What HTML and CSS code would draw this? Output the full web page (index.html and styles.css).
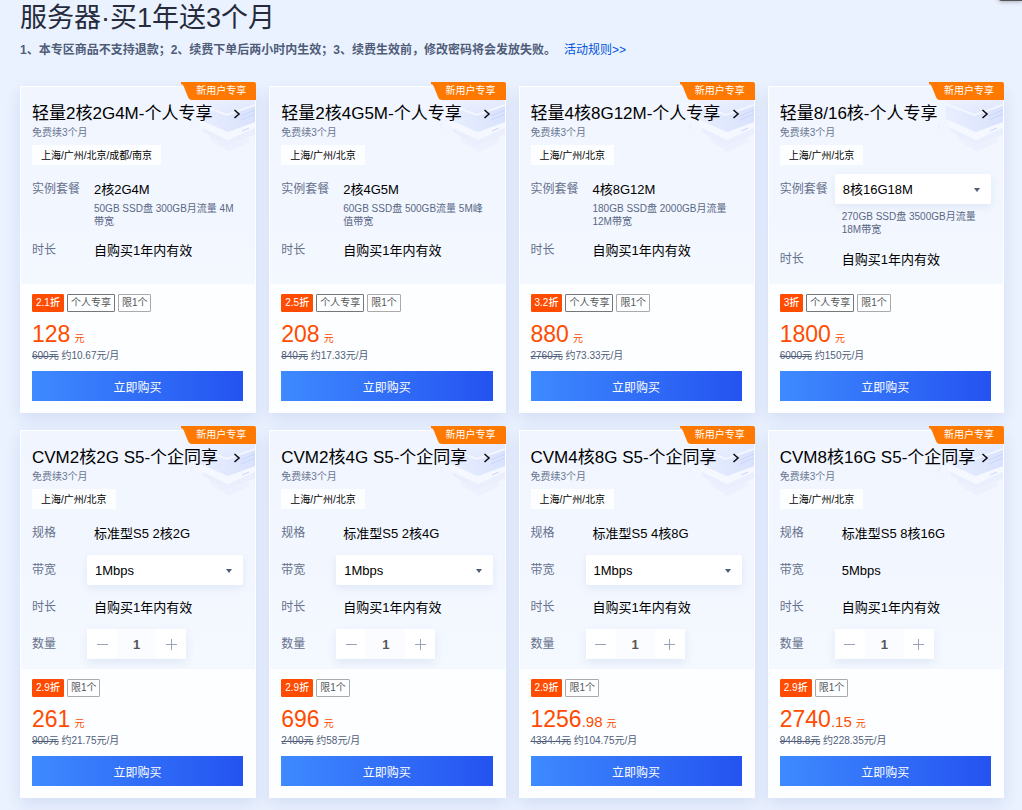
FILE: index.html
```html
<!DOCTYPE html>
<html lang="zh-CN">
<head>
<meta charset="utf-8">
<title>服务器·买1年送3个月</title>
<link rel="stylesheet" href="styles.css">
</head>
<body>
<svg class="sprite" aria-hidden="true">
  <defs>
    <linearGradient id="slab-top" x1="0" y1="0" x2="1" y2="1">
      <stop offset="0" stop-color="#eff3ff"/><stop offset="1" stop-color="#dde5fe"/>
    </linearGradient>
    <linearGradient id="slab-side" x1="0" y1="0" x2="1" y2="0">
      <stop offset="0" stop-color="#e9effe"/><stop offset="1" stop-color="#d9e2fd"/>
    </linearGradient>
  </defs>
  <symbol id="slabs" viewBox="0 0 66 64">
    <path d="M20 36 40 47 60 38V43L40 53 22 42Z" fill="#edf1fe"/>
    <path d="M14 28 39 41 66 29V35L39 47 14 33Z" fill="#eaeffe"/>
    <path d="M10 20 39 34 66 23V28L39 41 12 28Z" fill="#f6f8ff"/>
    <path d="M8 4 38 16 66 4V23L39 33 9 20Z" fill="url(#slab-side)"/>
    <path d="M6 2 20 0H66V5L38 16Z" fill="url(#slab-top)"/>
    <path d="M8 5 38 16 66 6" fill="none" stroke="#f3f6ff" stroke-width="2"/>
    <path d="M52 17 66 11M52 21 66 15M53 32 60 29" fill="none" stroke="#c9d6fa" stroke-width="1"/>
    <path d="M4 24Q-1 27 4 30" fill="none" stroke="#e8edfd" stroke-width="1"/>
  </symbol>
  <symbol id="ribbon" viewBox="0 0 75 18">
    <path d="M0 0H73Q75 0 75 2V18H11Q8 18 7 15L3 5Q2 2 0 2Z" fill="#ff7800"/>
  </symbol>
  <symbol id="chevron" viewBox="0 0 8 10">
    <path d="M1.5 1 6 5 1.5 9" fill="none" stroke="#111" stroke-width="1.6"/>
  </symbol>
</svg>
<div class="floating-tab"></div>
<main class="page">
  <header class="intro">
    <h1 class="intro-title">服务器·买1年送3个月</h1>
    <p class="intro-note"><strong>1、本专区商品不支持退款；2、续费下单后两小时内生效；3、续费生效前，修改密码将会发放失败。</strong><a class="intro-link" href="#">活动规则&gt;&gt;</a></p>
  </header>

  <div class="grid">
    <article class="card">
      <svg class="slabs"><use href="#slabs"/></svg>
      <div class="ribbon"><svg class="ribbon-shape"><use href="#ribbon"/></svg><span class="ribbon-text">新用户专享</span></div>
      <div class="config">
        <h2 class="title"><a class="title-link" href="#">轻量2核2G4M-个人专享<svg class="chevron"><use href="#chevron"/></svg></a></h2>
        <p class="sub">免费续3个月</p>
        <p class="region">上海/广州/北京/成都/南京</p>
        <div class="row"><span class="label">实例套餐</span><div class="field"><span class="value">2核2G4M</span><p class="detail">50GB SSD盘 300GB月流量 4M带宽</p></div></div>
        <div class="row"><span class="label">时长</span><div class="field"><span class="value">自购买1年内有效</span></div></div>
      </div>
      <div class="offer">
        <div class="tags"><span class="tag hot">2.1折</span><span class="tag dark">个人专享</span><span class="tag">限1个</span></div>
        <p class="price"><span class="amount">128</span><span class="unit">元</span></p>
        <p class="was"><s>600元</s> 约10.67元/月</p>
        <button class="buy" type="button">立即购买</button>
      </div>
    </article>

    <article class="card">
      <svg class="slabs"><use href="#slabs"/></svg>
      <div class="ribbon"><svg class="ribbon-shape"><use href="#ribbon"/></svg><span class="ribbon-text">新用户专享</span></div>
      <div class="config">
        <h2 class="title"><a class="title-link" href="#">轻量2核4G5M-个人专享<svg class="chevron"><use href="#chevron"/></svg></a></h2>
        <p class="sub">免费续3个月</p>
        <p class="region">上海/广州/北京</p>
        <div class="row"><span class="label">实例套餐</span><div class="field"><span class="value">2核4G5M</span><p class="detail">60GB SSD盘 500GB流量 5M峰值带宽</p></div></div>
        <div class="row"><span class="label">时长</span><div class="field"><span class="value">自购买1年内有效</span></div></div>
      </div>
      <div class="offer">
        <div class="tags"><span class="tag hot">2.5折</span><span class="tag dark">个人专享</span><span class="tag">限1个</span></div>
        <p class="price"><span class="amount">208</span><span class="unit">元</span></p>
        <p class="was"><s>840元</s> 约17.33元/月</p>
        <button class="buy" type="button">立即购买</button>
      </div>
    </article>

    <article class="card">
      <svg class="slabs"><use href="#slabs"/></svg>
      <div class="ribbon"><svg class="ribbon-shape"><use href="#ribbon"/></svg><span class="ribbon-text">新用户专享</span></div>
      <div class="config">
        <h2 class="title"><a class="title-link" href="#">轻量4核8G12M-个人专享<svg class="chevron"><use href="#chevron"/></svg></a></h2>
        <p class="sub">免费续3个月</p>
        <p class="region">上海/广州/北京</p>
        <div class="row"><span class="label">实例套餐</span><div class="field"><span class="value">4核8G12M</span><p class="detail">180GB SSD盘 2000GB月流量 12M带宽</p></div></div>
        <div class="row"><span class="label">时长</span><div class="field"><span class="value">自购买1年内有效</span></div></div>
      </div>
      <div class="offer">
        <div class="tags"><span class="tag hot">3.2折</span><span class="tag dark">个人专享</span><span class="tag">限1个</span></div>
        <p class="price"><span class="amount">880</span><span class="unit">元</span></p>
        <p class="was"><s>2760元</s> 约73.33元/月</p>
        <button class="buy" type="button">立即购买</button>
      </div>
    </article>

    <article class="card">
      <svg class="slabs"><use href="#slabs"/></svg>
      <div class="ribbon"><svg class="ribbon-shape"><use href="#ribbon"/></svg><span class="ribbon-text">新用户专享</span></div>
      <div class="config">
        <h2 class="title"><a class="title-link" href="#">轻量8/16核-个人专享<svg class="chevron"><use href="#chevron"/></svg></a></h2>
        <p class="sub">免费续3个月</p>
        <p class="region">上海/广州/北京</p>
        <div class="row"><label class="label" for="plan-4">实例套餐</label><div class="field"><div class="select-box"><select class="select" id="plan-4"><option>8核16G18M</option></select></div><p class="detail">270GB SSD盘 3500GB月流量 18M带宽</p></div></div>
        <div class="row"><span class="label">时长</span><div class="field"><span class="value">自购买1年内有效</span></div></div>
      </div>
      <div class="offer">
        <div class="tags"><span class="tag hot">3折</span><span class="tag dark">个人专享</span><span class="tag">限1个</span></div>
        <p class="price"><span class="amount">1800</span><span class="unit">元</span></p>
        <p class="was"><s>6000元</s> 约150元/月</p>
        <button class="buy" type="button">立即购买</button>
      </div>
    </article>

    <article class="card">
      <svg class="slabs"><use href="#slabs"/></svg>
      <div class="ribbon"><svg class="ribbon-shape"><use href="#ribbon"/></svg><span class="ribbon-text">新用户专享</span></div>
      <div class="config">
        <h2 class="title"><a class="title-link" href="#">CVM2核2G S5-个企同享<svg class="chevron"><use href="#chevron"/></svg></a></h2>
        <p class="sub">免费续3个月</p>
        <p class="region">上海/广州/北京</p>
        <div class="row"><span class="label">规格</span><div class="field"><span class="value">标准型S5 2核2G</span></div></div>
        <div class="row"><label class="label" for="band-5">带宽</label><div class="field"><div class="select-box"><select class="select" id="band-5"><option>1Mbps</option></select></div></div></div>
        <div class="row"><span class="label">时长</span><div class="field"><span class="value">自购买1年内有效</span></div></div>
        <div class="row"><label class="label" for="qty-5">数量</label><div class="stepper"><button class="step minus" type="button" aria-label="减少"></button><input class="qty" id="qty-5" type="text" value="1"><button class="step plus" type="button" aria-label="增加"></button></div></div>
      </div>
      <div class="offer">
        <div class="tags"><span class="tag hot">2.9折</span><span class="tag">限1个</span></div>
        <p class="price"><span class="amount">261</span><span class="unit">元</span></p>
        <p class="was"><s>900元</s> 约21.75元/月</p>
        <button class="buy" type="button">立即购买</button>
      </div>
    </article>

    <article class="card">
      <svg class="slabs"><use href="#slabs"/></svg>
      <div class="ribbon"><svg class="ribbon-shape"><use href="#ribbon"/></svg><span class="ribbon-text">新用户专享</span></div>
      <div class="config">
        <h2 class="title"><a class="title-link" href="#">CVM2核4G S5-个企同享<svg class="chevron"><use href="#chevron"/></svg></a></h2>
        <p class="sub">免费续3个月</p>
        <p class="region">上海/广州/北京</p>
        <div class="row"><span class="label">规格</span><div class="field"><span class="value">标准型S5 2核4G</span></div></div>
        <div class="row"><label class="label" for="band-6">带宽</label><div class="field"><div class="select-box"><select class="select" id="band-6"><option>1Mbps</option></select></div></div></div>
        <div class="row"><span class="label">时长</span><div class="field"><span class="value">自购买1年内有效</span></div></div>
        <div class="row"><label class="label" for="qty-6">数量</label><div class="stepper"><button class="step minus" type="button" aria-label="减少"></button><input class="qty" id="qty-6" type="text" value="1"><button class="step plus" type="button" aria-label="增加"></button></div></div>
      </div>
      <div class="offer">
        <div class="tags"><span class="tag hot">2.9折</span><span class="tag">限1个</span></div>
        <p class="price"><span class="amount">696</span><span class="unit">元</span></p>
        <p class="was"><s>2400元</s> 约58元/月</p>
        <button class="buy" type="button">立即购买</button>
      </div>
    </article>

    <article class="card">
      <svg class="slabs"><use href="#slabs"/></svg>
      <div class="ribbon"><svg class="ribbon-shape"><use href="#ribbon"/></svg><span class="ribbon-text">新用户专享</span></div>
      <div class="config">
        <h2 class="title"><a class="title-link" href="#">CVM4核8G S5-个企同享<svg class="chevron"><use href="#chevron"/></svg></a></h2>
        <p class="sub">免费续3个月</p>
        <p class="region">上海/广州/北京</p>
        <div class="row"><span class="label">规格</span><div class="field"><span class="value">标准型S5 4核8G</span></div></div>
        <div class="row"><label class="label" for="band-7">带宽</label><div class="field"><div class="select-box"><select class="select" id="band-7"><option>1Mbps</option></select></div></div></div>
        <div class="row"><span class="label">时长</span><div class="field"><span class="value">自购买1年内有效</span></div></div>
        <div class="row"><label class="label" for="qty-7">数量</label><div class="stepper"><button class="step minus" type="button" aria-label="减少"></button><input class="qty" id="qty-7" type="text" value="1"><button class="step plus" type="button" aria-label="增加"></button></div></div>
      </div>
      <div class="offer">
        <div class="tags"><span class="tag hot">2.9折</span><span class="tag">限1个</span></div>
        <p class="price"><span class="amount">1256</span><span class="cents">.98</span><span class="unit">元</span></p>
        <p class="was"><s>4334.4元</s> 约104.75元/月</p>
        <button class="buy" type="button">立即购买</button>
      </div>
    </article>

    <article class="card">
      <svg class="slabs"><use href="#slabs"/></svg>
      <div class="ribbon"><svg class="ribbon-shape"><use href="#ribbon"/></svg><span class="ribbon-text">新用户专享</span></div>
      <div class="config">
        <h2 class="title"><a class="title-link" href="#">CVM8核16G S5-个企同享<svg class="chevron"><use href="#chevron"/></svg></a></h2>
        <p class="sub">免费续3个月</p>
        <p class="region">上海/广州/北京</p>
        <div class="row"><span class="label">规格</span><div class="field"><span class="value">标准型S5 8核16G</span></div></div>
        <div class="row"><span class="label">带宽</span><div class="field"><span class="value">5Mbps</span></div></div>
        <div class="row"><span class="label">时长</span><div class="field"><span class="value">自购买1年内有效</span></div></div>
        <div class="row"><label class="label" for="qty-8">数量</label><div class="stepper"><button class="step minus" type="button" aria-label="减少"></button><input class="qty" id="qty-8" type="text" value="1"><button class="step plus" type="button" aria-label="增加"></button></div></div>
      </div>
      <div class="offer">
        <div class="tags"><span class="tag hot">2.9折</span><span class="tag">限1个</span></div>
        <p class="price"><span class="amount">2740</span><span class="cents">.15</span><span class="unit">元</span></p>
        <p class="was"><s>9448.8元</s> 约228.35元/月</p>
        <button class="buy" type="button">立即购买</button>
      </div>
    </article>
  </div>
</main>
</body>
</html>
```

FILE: styles.css
```css
* { box-sizing: border-box; }

body {
  margin: 0;
  background: #ebf2ff;
  color: #000;
  font: 13px/20px "Liberation Sans", "Noto Sans CJK SC", sans-serif;
}

h1, h2, p { margin: 0; font-weight: 400; }

button, input, select { font-family: inherit; margin: 0; }

.sprite { position: absolute; width: 0; height: 0; }

.floating-tab {
  position: absolute;
  top: -10px;
  right: 0;
  width: 24px;
  height: 11px;
  background: #555;
  border-radius: 0 0 0 4px;
  box-shadow: 0 0 5px rgba(0, 0, 0, .4);
}

.page { padding: 0 18px 12px 20px; }

.intro { padding-top: 1px; }

.intro-title { font-size: 27px; line-height: 34px; color: #262b3c; }

.intro-note {
  margin-top: 5px;
  font-size: 12px;
  line-height: 20px;
  color: #4f5d79;
}

.intro-link { margin-left: 8px; color: #0052d9; text-decoration: none; }

.grid {
  display: grid;
  grid-template-columns: repeat(4, minmax(0, 1fr));
  gap: 17px 13px;
  margin-top: 26px;
}

.card {
  position: relative;
  display: flex;
  flex-direction: column;
  background: linear-gradient(#f0f5ff, #f5f9ff 285px);
  border: 1px solid #fff;
  box-shadow: 0 6px 16px rgba(55, 99, 170, .14);
}

.slabs {
  position: absolute;
  top: 12px;
  right: 0;
  width: 66px;
  height: 64px;
}

.ribbon {
  position: absolute;
  top: -5px;
  right: -1px;
  width: 75px;
  height: 18px;
  padding-left: 5px;
  text-align: center;
}

.ribbon-shape { position: absolute; inset: 0; width: 75px; height: 18px; }

.ribbon-text { position: relative; display: block; font-size: 10px; line-height: 18px; color: #fff; }

.config { flex: 1; padding: 15px 12px 10px 11px; }

.title { position: relative; font-size: 17px; line-height: 24px; }

.title-link {
  display: flex;
  align-items: center;
  justify-content: space-between;
  color: #000;
  text-decoration: none;
  white-space: nowrap;
}

.chevron { flex: none; width: 8px; height: 10px; margin-right: 2px; }

.sub { font-size: 10px; line-height: 14px; color: #6b7690; }

.region {
  width: fit-content;
  margin: 5px 0 9px;
  padding: 1px 9px 0;
  background: rgba(255, 255, 255, .85);
  font-size: 10px;
  line-height: 19px;
}

.row { display: grid; grid-template-columns: 55px minmax(0, 1fr); }

.row + .row { margin-top: 7px; }

.label { font-size: 12px; line-height: 30px; color: #66718c; }

.value { display: block; padding: 6px 0 4px 7px; line-height: 20px; white-space: nowrap; }

.detail { padding: 0 3px 0 7px; font-size: 10px; line-height: 13px; color: #5a6785; }

.value + .detail { margin-top: -2px; }

.select-box { position: relative; }

.select-box + .detail { margin-top: 6px; padding-bottom: 1px; }

.select-box::after {
  content: "";
  position: absolute;
  top: 14px;
  right: 11px;
  border: 3px solid transparent;
  border-top: 4px solid #4f5d79;
  border-bottom: 0;
  pointer-events: none;
}

.select {
  display: block;
  width: 100%;
  height: 30px;
  padding: 1px 24px 0 8px;
  appearance: none;
  border: 0;
  border-radius: 2px;
  background: #fff;
  box-shadow: 0 3px 8px rgba(55, 99, 170, .1);
  color: #000;
  font-size: 13px;
}

.stepper {
  display: flex;
  width: fit-content;
  box-shadow: 0 4px 10px rgba(55, 99, 170, .1);
}

.step {
  display: grid;
  place-items: center;
  width: 30px;
  height: 30px;
  padding: 0;
  border: 0;
  background: #fff;
  color: #9aa3b8;
}

.step::before { content: ""; grid-area: 1 / 1; width: 11px; height: 1px; background: currentColor; }

.plus::after { content: ""; grid-area: 1 / 1; width: 1px; height: 11px; background: currentColor; }

.qty {
  width: 39px;
  height: 30px;
  padding: 0;
  border: 0;
  background: #fbfcff;
  color: #555;
  font-size: 13px;
  font-weight: 700;
  text-align: center;
}

.offer { padding: 10px 12px 11px 11px; background: #fdfeff; }

.tags { display: flex; gap: 3px; }

.tag {
  padding: 0 3px;
  border: 1px solid #aaa;
  border-radius: 1px;
  font-size: 10px;
  line-height: 16px;
  color: #555;
}

.tag.hot { background: #ff4c00; border-color: #ff4c00; color: #fff; font-weight: 500; }

.tag.dark { border-color: #777; }

.price { display: flex; align-items: baseline; margin-top: 8px; color: #ff4c00; }

.amount { font-size: 23px; line-height: 28px; }

.cents { font-size: 15px; line-height: 15px; }

.unit { margin-left: 4px; font-size: 10px; line-height: 12px; }

.was { margin-top: 1px; font-size: 10px; line-height: 14px; color: #4f5d79; }

.buy {
  display: block;
  width: 100%;
  height: 30px;
  margin-top: 8px;
  padding: 0;
  border: 0;
  background: linear-gradient(90deg, #3e8aff, #2453f0);
  color: #fff;
  font-size: 12px;
}
```
